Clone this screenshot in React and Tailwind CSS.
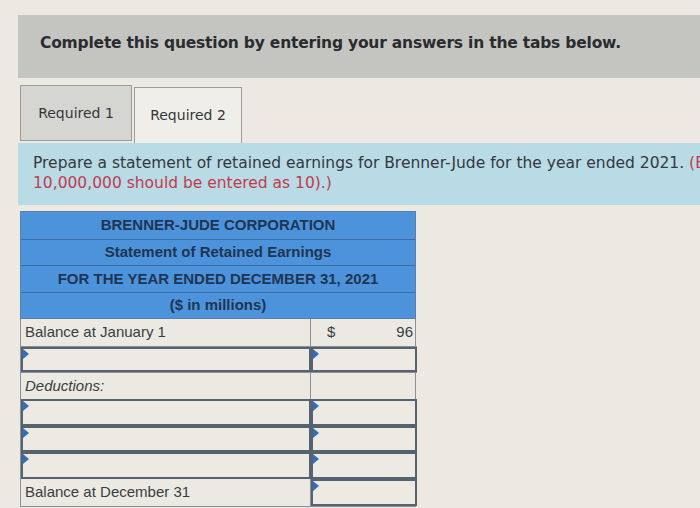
import React from "react";

const headerRows = [
  "BRENNER-JUDE CORPORATION",
  "Statement of Retained Earnings",
  "FOR THE YEAR ENDED DECEMBER 31, 2021",
  "($ in millions)",
];

const Marker = () => (
  <span className="absolute left-0 top-0 w-0 h-0 border-t-[5px] border-b-[5px] border-l-[6px] border-t-transparent border-b-transparent border-l-[#2f6fc0]" />
);

const InputCell = ({ className = "" }) => (
  <div className={`relative h-full border-2 border-[#56626e] bg-[#eceae3] ${className}`}>
    <Marker />
  </div>
);

const App = () => {
  return (
    <div className="min-h-[508px] w-[700px] overflow-hidden bg-[#ebe9e2] pt-[15px] pl-[18px]">
      {/* Banner */}
      <div className="h-[63px] bg-[#c4c5c0] flex items-center pl-[22px] pb-[6px]">
        <p className="text-[15.5px] font-bold text-[#2a2c30] font-['DejaVu_Sans',sans-serif] tracking-[-0.2px]">
          Complete this question by entering your answers in the tabs below.
        </p>
      </div>

      {/* Tabs */}
      <div className="mt-[7px] flex items-end gap-[2px] pl-[2px]">
        <div className="w-[112px] h-[56px] mb-[2px] bg-[#d5d6d1] border border-[#9c9d9a] flex items-center justify-center text-[14px] text-[#33363a] font-['DejaVu_Sans',sans-serif]">
          Required 1
        </div>
        <div className="w-[108px] h-[56px] bg-[#efeee8] border border-b-0 border-[#9c9d9a] flex items-center justify-center text-[14px] text-[#33363a] font-['DejaVu_Sans',sans-serif]">
          Required 2
        </div>
      </div>

      {/* Instructions */}
      <div className="h-[62px] bg-[#b8dbe5] pl-[15px] pt-[10px] font-['DejaVu_Sans',sans-serif] text-[15.5px] leading-[20px] text-[#34383e] whitespace-nowrap overflow-hidden">
        <p>
          Prepare a statement of retained earnings for Brenner-Jude for the year ended 2021.{" "}
          <span className="text-[#c33a4e]">(Enter your answers in millions.</span>
        </p>
        <p className="text-[#c33a4e]">10,000,000 should be entered as 10).)</p>
      </div>

      {/* Statement table */}
      <div className="mt-[6px] ml-[2px] w-[396px] font-['Liberation_Sans',Arial,sans-serif] text-[15px]">
        <div className="border border-[#5d7fa6] bg-[#4c93dc]">
          {headerRows.map((t, i) => (
            <div
              key={i}
              className={`h-[26.5px] flex items-center justify-center font-bold text-[#1f3552] ${i > 0 ? "border-t border-[#3a6ea8]" : ""}`}
            >
              {t}
            </div>
          ))}
        </div>

        <div className="grid grid-cols-[290px_106px] border-x border-b border-[#8a9096] text-[#3a3d42]">
          {/* Balance at January 1 */}
          <div className="h-[27px] flex items-center pl-[4px] border-r border-[#8a9096]">Balance at January 1</div>
          <div className="h-[27px] flex items-center justify-between pl-[16px] pr-[4px]">
            <span>$</span>
            <span>96</span>
          </div>

          {/* Blank input row */}
          <div className="h-[26px] border-t border-[#8a9096]">
            <InputCell />
          </div>
          <div className="h-[26px] border-t border-[#8a9096]">
            <InputCell />
          </div>

          {/* Deductions */}
          <div className="h-[27px] flex items-center pl-[4px] italic border-r border-t border-[#8a9096]">Deductions:</div>
          <div className="h-[27px] border-t border-[#8a9096]" />

          {[0, 1, 2].map((r) => (
            <React.Fragment key={r}>
              <div className="h-[26.5px]">
                <InputCell />
              </div>
              <div className="h-[26.5px]">
                <InputCell />
              </div>
            </React.Fragment>
          ))}

          {/* Balance at December 31 */}
          <div className="h-[27px] flex items-center pl-[4px] border-r border-[#8a9096]">Balance at December 31</div>
          <div className="h-[27px]">
            <InputCell />
          </div>
        </div>
      </div>
    </div>
  );
};

export default App;
